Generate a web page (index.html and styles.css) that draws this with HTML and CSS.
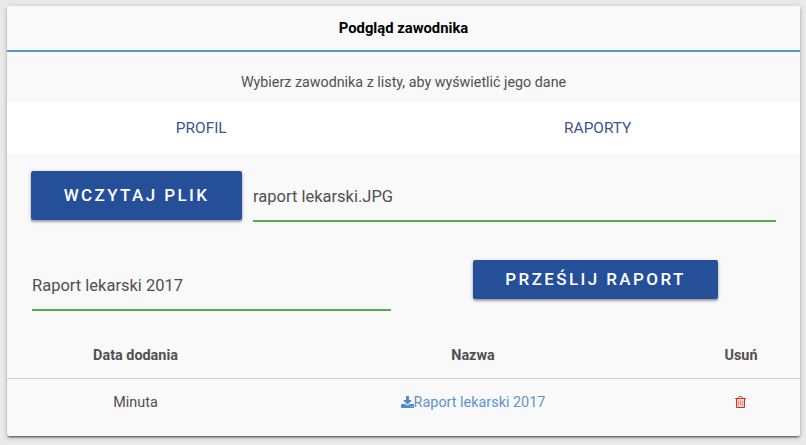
FILE: index.html
```html
<!DOCTYPE html>
<html lang="pl">
<head>
<meta charset="utf-8">
<title>Podgląd zawodnika</title>
<link rel="stylesheet" href="styles.css">
</head>
<body>
<main class="card">
  <h1 class="card-title">Podgląd zawodnika</h1>
  <p class="hint">Wybierz zawodnika z listy, aby wyświetlić jego dane</p>
  <nav class="tabs"><a class="tab">PROFIL</a><a class="tab">RAPORTY</a></nav>
  <div class="file-row">
    <button class="btn btn-file">WCZYTAJ PLIK</button>
    <div class="field file-name">raport lekarski.JPG</div>
  </div>
  <div class="send-row">
    <div class="field report-name">Raport lekarski 2017</div>
    <button class="btn btn-send">PRZEŚLIJ RAPORT</button>
  </div>
  <div class="table">
    <div class="row head"><span>Data dodania</span><span>Nazwa</span><span>Usuń</span></div>
    <div class="row"><span>Minuta</span>
      <a class="link"><svg class="download" viewBox="0 0 1664 1600"><path fill-rule="evenodd" d="M1280 1344q0-26-19-45t-45-19-45 19-19 45 19 45 45 19 45-19 19-45zm256 0q0-26-19-45t-45-19-45 19-19 45 19 45 45 19 45-19 19-45zm128-224v320q0 40-28 68t-68 28H96q-40 0-68-28t-28-68v-320q0-40 28-68t68-28h465l135 136q58 56 136 56t136-56l136-136h464q40 0 68 28t28 68zm-325-569q17 41-14 70l-448 448q-18 19-45 19t-45-19L339 621q-31-29-14-70 17-39 59-39h256V64q0-26 19-45t45-19h256q26 0 45 19t19 45v448h256q42 0 59 39z"/></svg>Raport lekarski 2017</a>
      <span><svg class="trash" viewBox="0 0 11 12"><path class="trash-fill" d="M1.500 3h8v8.500h-8z"/><path class="trash-line" d="M0 2.500h11M3.500 2.500v-1l1-1h2l1 1v1M1.500 3v8.500h8V3"/><path class="trash-ribs" d="M3.500 4.500v5M5.500 4.500v5M7.500 4.500v5"/></svg></span>
    </div>
  </div>
</main>
</body>
</html>
```
FILE: styles.css
```css
* { box-sizing: border-box; }
body { margin: 0; padding: 6px 6px 0 7px; height: 445px; background: #e9e9e9; font-family: Roboto, sans-serif; font-size: 14.4px; color: #505050; }
.card { height: 430px; background: #f9f9f9; border-radius: 2px; box-shadow: 0 2px 2px rgba(0,0,0,.24), 0 1px 5px rgba(0,0,0,.2), 0 3px 1px -2px rgba(0,0,0,.3); }
.card-title { height: 46px; margin: 0; border-bottom: 2px solid #5597d0; font-size: 14.8px; font-weight: 700; line-height: 45px; text-align: center; color: #000; }
.hint { height: 50px; margin: 0; padding-top: 19px; font-size: 14.3px; line-height: 22px; text-align: center; }
.tabs { display: flex; height: 52px; background: #fff; }
.tab { flex: 1; padding-right: 8px; font-size: 15.4px; line-height: 53px; text-align: center; color: #3d5590; }
.file-row { display: flex; gap: 11px; padding: 17px 24px 0; }
.field { border-bottom: 2px solid #57a854; font-size: 16.5px; white-space: nowrap; }
.file-name { flex: 1; height: 51px; line-height: 51px; }
.btn { border: 0; padding: 0 0 2px; border-radius: 2px; background: #264f99; color: #fff; font-family: inherit; font-size: 17px; font-weight: 500; letter-spacing: 2.4px; box-shadow: 0 2px 2px rgba(0,0,0,.25), 0 1px 4px rgba(0,0,0,.2); }
.btn-file { width: 211px; height: 49px; }
.send-row { display: flex; align-items: flex-start; gap: 82px; padding: 38px 24px 0 25px; }
.report-name { width: 359px; height: 51px; line-height: 51px; }
.btn-send { width: 245px; height: 39px; }
.table { padding-top: 21px; }
.row { display: grid; grid-template-columns: 257px 418px 118px; height: 47px; align-items: center; text-align: center; }
.head { border-bottom: 1px solid #cfcfcf; font-weight: 700; }
.link { color: #5c94cc; }
.download { width: 13px; height: 12.5px; fill: #4c8dc9; vertical-align: -1px; }
.trash { display: block; width: 11px; height: 12px; margin: 0 auto 1px 53px; fill: none; stroke-width: 1; }
.trash-fill { fill: #fbd9cc; }
.trash-line { stroke: #d92d22; }
.trash-ribs { stroke: #ed8570; }
```
